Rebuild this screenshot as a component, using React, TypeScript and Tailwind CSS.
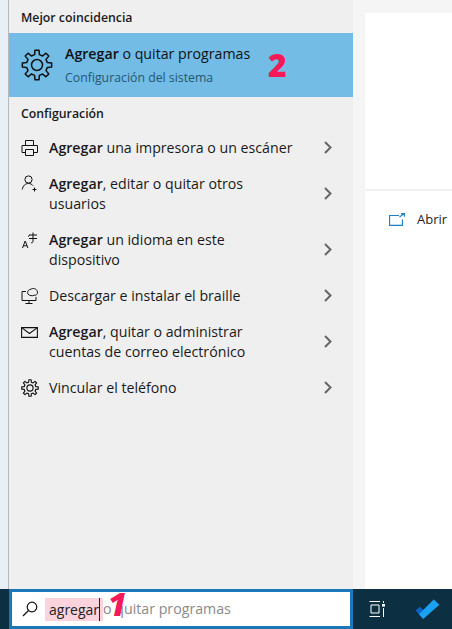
import React from 'react';

const font = { fontFamily: '"Open Sans", "Noto Sans", sans-serif' };

function Chevron() {
  return (
    <svg width="10" height="14" viewBox="0 0 10 14" fill="none" stroke="#666" strokeWidth="2">
      <path d="M2 1 L7.5 6.5 L2 12" />
    </svg>
  );
}

function Gear({ size, sw }: { size: number; sw: number }) {
  const teeth = [0, 45, 90, 135, 180, 225, 270, 315];
  const r1 = 10.6, r2 = 14.8;
  const pts: string[] = [];
  teeth.forEach((a) => {
    const rad = (d: number) => ((a + d) * Math.PI) / 180;
    const p = (r: number, d: number) => `${(16 + r * Math.cos(rad(d))).toFixed(2)} ${(16 + r * Math.sin(rad(d))).toFixed(2)}`;
    pts.push(p(r1, -13), p(r2, -8), p(r2, 8), p(r1, 13));
  });
  return (
    <svg width={size} height={size} viewBox="0 0 32 32" fill="none" stroke="#111" strokeWidth={sw} strokeLinejoin="round">
      <path d={`M${pts.join(' L')} Z`} />
      <circle cx="16" cy="16" r="5.5" />
    </svg>
  );
}

function PrinterIcon() {
  return (
    <svg width="18" height="18" viewBox="0 0 18 18" fill="none" stroke="#111" strokeWidth="1">
      <path d="M4.5 6.5V1.5H12.5V6.5" />
      <path d="M4.5 13.5H1V6.5H16.5V13.5H12.5" />
      <path d="M4.5 10.5H12.5V16.5H4.5Z" />
    </svg>
  );
}

function UserIcon() {
  return (
    <svg width="18" height="18" viewBox="0 0 18 18" fill="none" stroke="#111" strokeWidth="1">
      <circle cx="7.5" cy="4.5" r="3.6" />
      <path d="M1.2 14.5C1.9 10.8 4.2 8.5 7.5 8.5C9.5 8.5 11 9.3 12.1 10.7" />
      <path d="M13.5 12.5V16.5M11.5 14.5H15.5" />
    </svg>
  );
}

function LangIcon() {
  return (
    <svg width="18" height="18" viewBox="0 0 18 18" fill="none" stroke="#111" strokeWidth="1">
      <path d="M1.5 17L4.2 10L6.9 17M2.5 14.8H5.9" />
      <path d="M8 4H16M8 7.5H16M12 1.5V10.5C12 11.5 11.3 12 10 11.7M7 5.7C7.5 5.5 8 4.9 8.5 4" />
    </svg>
  );
}

function BrailleIcon() {
  return (
    <svg width="18" height="18" viewBox="0 0 18 18" fill="none" stroke="#111" strokeWidth="1">
      <path d="M5 4.5H1V13.5H15V10" />
      <path d="M8 13.5V16.5M4.5 16.5H11.5" />
      <path d="M7 7C5.8 5 7.4 2.4 10 2.2C12 0.8 15.6 1.6 16.2 4.2C17.4 6.6 15.4 8.6 13.2 8.2C11.4 9.2 8.4 8.8 7 7Z" />
    </svg>
  );
}

function MailIcon() {
  return (
    <svg width="17" height="11" viewBox="0 0 17 11" fill="none" stroke="#111" strokeWidth="1.1">
      <path d="M0.6 0.6H16.4V10.4H0.6Z" />
      <path d="M0.6 0.6L8.5 6.5L16.4 0.6" />
    </svg>
  );
}

function Row({ icon, children, h, iconTop }: { icon: React.ReactNode; children: React.ReactNode; h: string; iconTop?: boolean }) {
  return (
    <div className={`flex pl-[12px] pr-[20px] ${h} ${iconTop ? 'items-start py-[8px]' : 'items-center'}`}>
      <div className={`w-[28px] shrink-0 flex items-center ${iconTop ? 'h-[20px]' : ''}`}>{icon}</div>
      <div className="flex-1 text-[14.2px] leading-[20px] text-[#1a1a1a]">{children}</div>
      <div className={`w-[10px] shrink-0 flex items-center ${iconTop ? 'self-center' : ''}`}><Chevron /></div>
    </div>
  );
}

export default function App() {
  return (
    <div className="relative w-[452px] h-[629px] overflow-hidden flex flex-col bg-[#f5f5f5]" style={font}>
      <div className="flex flex-1 min-h-0">
        <div className="w-[8px] bg-[#e9eff6]" />
        <div className="w-[1px] bg-[#b5b9bd]" />
        <div className="w-[344px] bg-[#efefef] flex flex-col">
          <div className="h-[33px] pl-[12px] pt-[9px] text-[12.3px] leading-[18px] font-semibold text-[#1a1a1a]">Mejor coincidencia</div>
          <div className="h-[64px] bg-[#72bce6] flex items-center pl-[12px]">
            <div className="w-[44px] shrink-0 flex"><Gear size={32} sw={1.5} /></div>
            <div>
              <div className="text-[14.2px] leading-[20px] text-[#111]"><b className="font-semibold">Agregar</b> o quitar programas</div>
              <div className="text-[12.3px] leading-[18px] mt-[5px] text-[#27566f]">Configuración del sistema</div>
            </div>
          </div>
          <div className="h-[33px] pl-[12px] pt-[8px] text-[12.3px] leading-[18px] font-semibold text-[#1a1a1a]">Configuración</div>
          <Row h="h-[36px]" icon={<PrinterIcon />}><b className="font-semibold">Agregar</b> una impresora o un escáner</Row>
          <Row h="h-[56px]" iconTop icon={<UserIcon />}><b className="font-semibold">Agregar</b>, editar o quitar otros<br />usuarios</Row>
          <Row h="h-[56px]" iconTop icon={<LangIcon />}><b className="font-semibold">Agregar</b> un idioma en este<br />dispositivo</Row>
          <Row h="h-[36px]" icon={<BrailleIcon />}>Descargar e instalar el braille</Row>
          <Row h="h-[56px]" iconTop icon={<MailIcon />}><b className="font-semibold">Agregar</b>, quitar o administrar<br />cuentas de correo electrónico</Row>
          <Row h="h-[36px]" icon={<Gear size={18} sw={2} />}>Vincular el teléfono</Row>
        </div>
        <div className="w-[12px]" />
        <div className="flex-1 mt-[13px] flex flex-col bg-white">
          <div className="h-[178px] border-b-[2px] border-[#f0f0f0]" />
          <div className="flex items-center pl-[24px] pt-[6px] h-[50px]">
            <svg width="16" height="13" viewBox="0 0 16 13" fill="none" stroke="#1a7fc4" strokeWidth="1.1">
              <path d="M10 2.5H0.6V12.4H13.4V6.5" />
              <path d="M10.5 4L15 0.8M12 0.6H15.4V3.8" />
            </svg>
            <span className="ml-[12px] text-[13px] leading-[20px] text-[#222]">Abrir</span>
          </div>
        </div>
      </div>

      <div className="h-[40px] flex bg-[#0c3041]">
        <div className="w-[9px]" />
        <div className="w-[344px] h-[40px] bg-white border-[3px] border-[#1b78b8] flex items-center pl-[10px]">
          <svg width="16" height="16" viewBox="0 0 16 16" fill="none" stroke="#111" strokeWidth="1.2">
            <circle cx="10" cy="6" r="4.8" />
            <path d="M6.5 9.5L1 15" />
          </svg>
          <div className="ml-[7px] text-[14.2px] leading-[20px] flex items-center">
            <span className="bg-[#fbd3dc] h-[23px] leading-[23px] pl-[4px] pr-[3px] text-[#222]">
              <span className="inline-block border-r border-[#222] text-[14px]">agregar</span>
            </span>
            <span className="text-[#8a8a8a]">o quitar programas</span>
          </div>
        </div>
        <div className="flex-1 flex items-center pl-[16px]">
          <svg width="16" height="16" viewBox="0 0 16 16" fill="none" stroke="#fff" strokeWidth="1">
            <path d="M0.5 0.5H11M0.5 15.5H11M2 4H10V12H2Z" />
            <path d="M14.5 0V2M14.5 7V16" />
            <rect x="13" y="3" width="3" height="2.6" fill="#fff" stroke="none" />
          </svg>
          <svg className="ml-[30px]" width="25" height="21" viewBox="0 0 26 22">
            <path d="M0.5 12L5 8L12 15L8.5 21Z" fill="#0a62c4" />
            <path d="M8.5 21L4 16L19.5 0.5L25.5 6Z" fill="#1ba1f2" />
          </svg>
        </div>
      </div>

      <span className="absolute left-[268px] top-[46px] text-[32px] leading-[38px] font-extrabold text-[#f5195a]">2</span>
      <span className="absolute left-[108px] top-[586px] text-[32px] leading-[36px] font-extrabold italic text-[#f5195a]">1</span>
    </div>
  );
}
